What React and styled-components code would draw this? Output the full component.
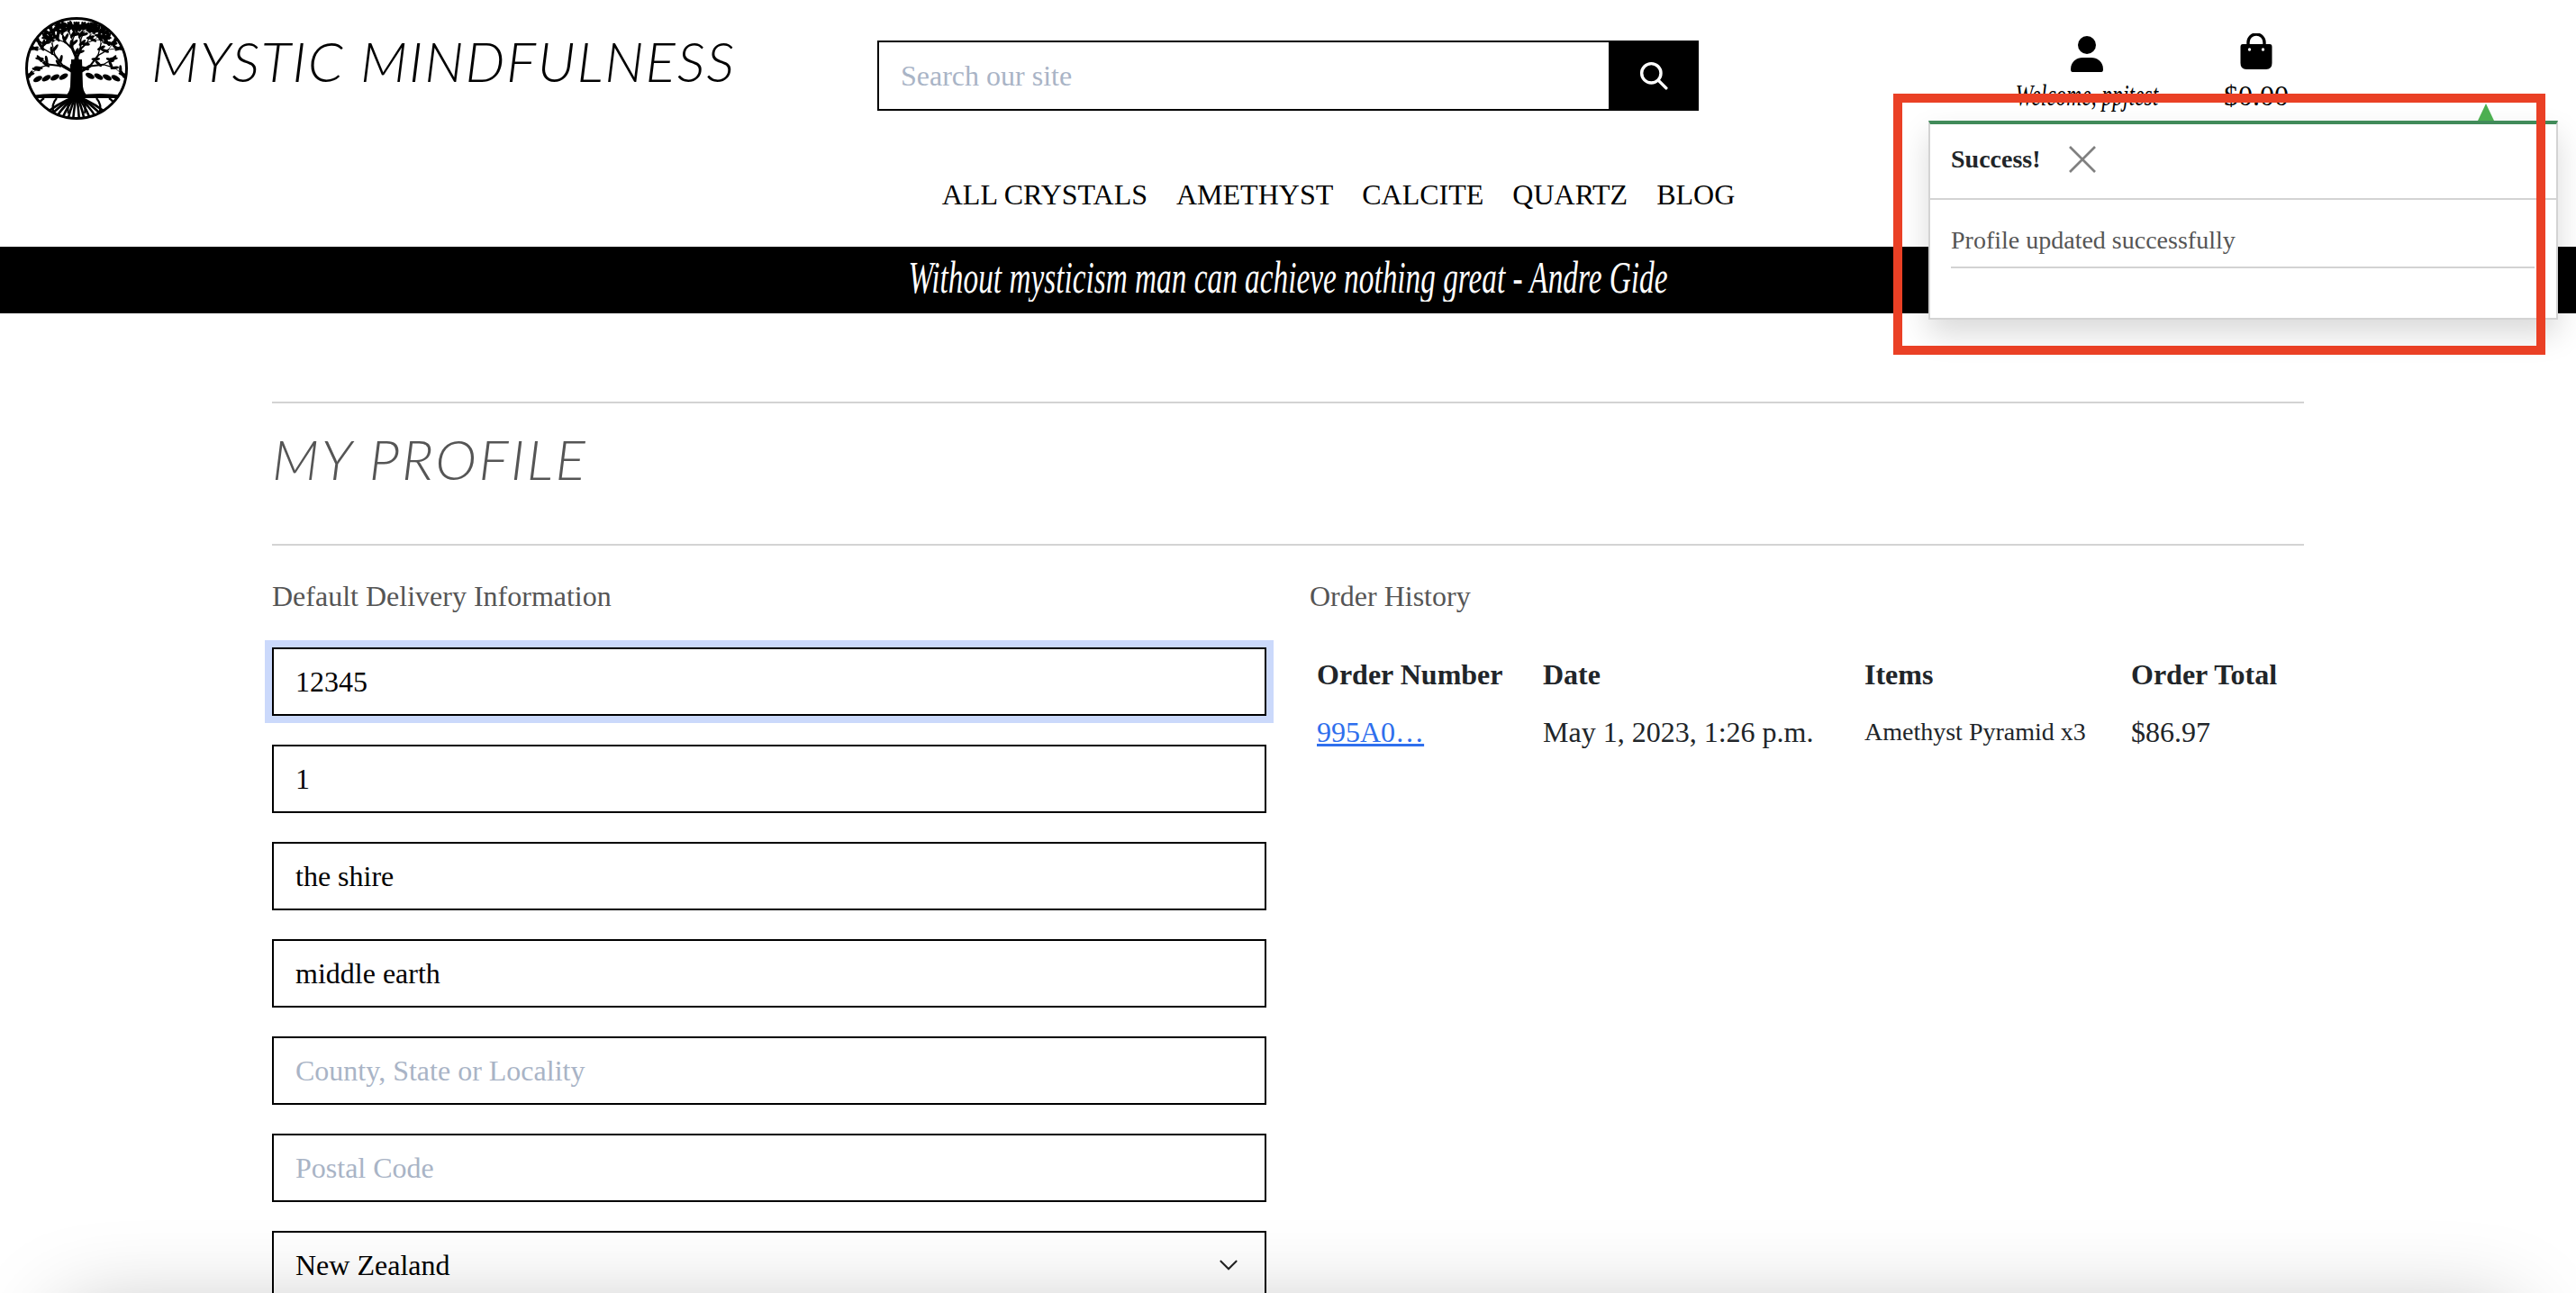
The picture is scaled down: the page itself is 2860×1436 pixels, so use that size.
import React from "react";
import styled, { createGlobalStyle } from "styled-components";

const GlobalStyle = createGlobalStyle`
  html, body {
    margin: 0;
    height: 1436px;
    overflow: hidden;
    background: #fff;
  }
  body {
    font-family: "Liberation Serif", "Times New Roman", serif;
    font-size: 32px;
    color: #000;
  }
  * { box-sizing: border-box; }
`;

// tree logo, grown from a few fixed rules so the branches stay inside the ring
const buildTree = () => {
  const limbs = [];
  const leaves = [];
  const grow = (x, y, angle, len, width, depth) => {
    const x2 = x + Math.cos(angle) * len;
    const y2 = y + Math.sin(angle) * len;
    const tooFar = Math.hypot(x2 - 58, y2 - 58) > 52 || y2 > 68;
    if (tooFar || depth === 0) {
      leaves.push({ x, y, r: (angle * 180) / Math.PI });
      return;
    }
    limbs.push({ x, y, x2, y2, width });
    leaves.push({ x: (x + x2) / 2 + 2, y: (y + y2) / 2 - 2, r: (angle * 180) / Math.PI + 50 });
    grow(x2, y2, angle - 0.4, len * 0.88, width * 0.62, depth - 1);
    grow(x2, y2, angle + 0.4, len * 0.88, width * 0.62, depth - 1);
  };
  grow(58, 60, -Math.PI / 2, 13, 5, 6);
  grow(58, 64, -Math.PI / 2 - 1.05, 17, 3.4, 5);
  grow(58, 64, -Math.PI / 2 + 1.05, 17, 3.4, 5);
  return { limbs, leaves };
};

const tree = buildTree();
const lowLeaves = [14, 24, 34, 44, 72, 82, 92, 102];
const roots = [-44, -34, -25, -17, -10, -4, 3, 9, 16, 24, 33, 43];

const TreeLogo = () => (
  <svg width="116" height="118" viewBox="0 0 116 118">
    <defs>
      <clipPath id="ring">
        <circle cx="58" cy="58" r="56" />
      </clipPath>
    </defs>
    <circle cx="58" cy="58" r="55.5" fill="#fff" stroke="#000" strokeWidth="3" />
    <g clipPath="url(#ring)">
      {tree.limbs.map((l, i) => (
        <line key={i} x1={l.x} y1={l.y} x2={l.x2} y2={l.y2} stroke="#000" strokeWidth={l.width} strokeLinecap="round" />
      ))}
      {tree.leaves.map((l, i) => (
        <ellipse key={i} cx={l.x} cy={l.y} rx="4.8" ry="1.6" fill="#000" transform={`rotate(${l.r} ${l.x} ${l.y})`} />
      ))}
      {lowLeaves.map((x, i) => (
        <ellipse key={x} cx={x} cy={i < 4 ? 70 + i * -1 : 66 + (i - 4)} rx="5.4" ry="2.8" fill="#000" transform={`rotate(${i < 4 ? -28 : 28} ${x} 68)`} />
      ))}
      <path d="M52 48 L64 48 L65 78 Q66 86 72 90 L44 90 Q50 86 51 78 Z" fill="#000" />
      <path d="M8 88 Q34 84 58 88 Q84 84 110 88 L110 91 L8 91 Z" fill="#000" />
      {roots.map((dx) => (
        <path key={dx} d={`M58 89 Q${58 + dx * 0.5} 96 ${58 + dx} 116`} fill="none" stroke="#000" strokeWidth="2.6" />
      ))}
      {[-36, -22, -8, 8, 22, 36].map((dx) => (
        <path key={dx} d={`M${58 + dx} 91 Q${58 + dx * 1.3} 98 ${58 + dx * 1.15} 108`} fill="none" stroke="#000" strokeWidth="2.2" />
      ))}
    </g>
  </svg>
);

const SearchIcon = () => (
  <svg width="32" height="32" viewBox="0 0 30 30" fill="none" stroke="#fff" strokeWidth="3.2" strokeLinecap="round">
    <circle cx="12.5" cy="12.5" r="10" />
    <line x1="20" y1="20" x2="28" y2="28" />
  </svg>
);

const UserIcon = () => (
  <svg width="36" height="43" viewBox="0 -3 36 43" fill="#000">
    <circle cx="18" cy="10" r="10" />
    <path d="M0 37 C0 28 7 24 13 24 L23 24 C29 24 36 28 36 37 Q36 40 34 40 L2 40 Q0 40 0 37 Z" />
  </svg>
);

const BagIcon = () => (
  <svg width="36" height="43" viewBox="0 0 36 43">
    <path d="M9 13 V10 a9 9 0 0 1 18 0 V13" fill="none" stroke="#000" strokeWidth="3.4" />
    <path d="M3 12 H33 Q35.5 12 35.5 15 V33 Q35.5 40 29 40 H7 Q0.5 40 0.5 33 V15 Q0.5 12 3 12 Z" fill="#000" />
    <circle cx="10.5" cy="18" r="1.7" fill="#fff" />
    <circle cx="25.5" cy="18" r="1.7" fill="#fff" />
  </svg>
);

const Chevron = () => (
  <svg width="22" height="12" viewBox="0 0 24 14" fill="none" stroke="#222" strokeWidth="2.4" strokeLinecap="round">
    <path d="M2 2 L12 12 L22 2" />
  </svg>
);

const CloseGlyph = () => (
  <svg width="30" height="30" viewBox="0 0 30 30" stroke="#808080" strokeWidth="2.6">
    <line x1="1" y1="1" x2="29" y2="29" />
    <line x1="29" y1="1" x2="1" y2="29" />
  </svg>
);

const fields = [
  { value: "12345", focused: true },
  { value: "1" },
  { value: "the shire" },
  { value: "middle earth" },
  { placeholder: "County, State or Locality" },
  { placeholder: "Postal Code" },
];

export default function App() {
  return (
    <>
      <GlobalStyle />
      <Page>
        <Header>
          <TopRow>
            <Brand>
              <TreeLogo />
              <BrandName>MYSTIC MINDFULNESS</BrandName>
            </Brand>
            <SearchForm>
              <SearchInput placeholder="Search our site" readOnly />
              <SearchButton aria-label="Search">
                <SearchIcon />
              </SearchButton>
            </SearchForm>
            <AccountLinks>
              <AccountLink>
                <UserIcon />
                <WelcomeText>Welcome, ppjtest</WelcomeText>
              </AccountLink>
              <AccountLink>
                <BagIcon />
                <CartTotal>$0.00</CartTotal>
              </AccountLink>
            </AccountLinks>
          </TopRow>
          <Nav>
            <NavLink>ALL CRYSTALS</NavLink>
            <NavLink>AMETHYST</NavLink>
            <NavLink>CALCITE</NavLink>
            <NavLink>QUARTZ</NavLink>
            <NavLink>BLOG</NavLink>
          </Nav>
        </Header>
        <QuoteBar>
          <QuoteText>Without mysticism man can achieve nothing great - Andre Gide</QuoteText>
        </QuoteBar>
        <Main>
          <TitleBlock>
            <PageTitle>MY PROFILE</PageTitle>
          </TitleBlock>
          <Columns>
            <section>
              <SectionHeading>Default Delivery Information</SectionHeading>
              <Form>
                {fields.map((f, i) => (
                  <TextInput key={i} $focused={f.focused} value={f.value} placeholder={f.placeholder} readOnly />
                ))}
                <SelectBox>
                  New Zealand
                  <Chevron />
                </SelectBox>
              </Form>
            </section>
            <section>
              <SectionHeading>Order History</SectionHeading>
              <OrderTable>
                <thead>
                  <tr>
                    <HeadCell $width={251}>Order Number</HeadCell>
                    <HeadCell $width={357}>Date</HeadCell>
                    <HeadCell $width={296}>Items</HeadCell>
                    <HeadCell $width={200}>Order Total</HeadCell>
                  </tr>
                </thead>
                <tbody>
                  <tr>
                    <BodyCell><OrderLink>995A0…</OrderLink></BodyCell>
                    <BodyCell>May 1, 2023, 1:26 p.m.</BodyCell>
                    <BodyCell $small>Amethyst Pyramid x3</BodyCell>
                    <BodyCell>$86.97</BodyCell>
                  </tr>
                </tbody>
              </OrderTable>
            </section>
          </Columns>
        </Main>

        <Toast>
          <ToastArrow />
          <ToastHead>
            <ToastTitle>Success!</ToastTitle>
            <CloseGlyph />
          </ToastHead>
          <ToastBody>
            <ToastMessage>Profile updated successfully</ToastMessage>
          </ToastBody>
        </Toast>
        <Highlight />
        <BottomShadow />
      </Page>
    </>
  );
}

const Page = styled.div`
  position: relative;
  width: 2860px;
  height: 1436px;
  overflow: hidden;
`;

const Header = styled.header`
  height: 274px;
  display: flex;
  flex-direction: column;
`;

const TopRow = styled.div`
  display: grid;
  grid-template-columns: 974px 912px 1fr;
  height: 192px;
`;

const Brand = styled.a`
  display: flex;
  align-items: flex-start;
  gap: 25px;
  padding: 18px 0 0 27px;
`;

const BrandName = styled.span`
  margin-top: 18px;
  font-family: "Lato", "Liberation Sans", sans-serif;
  font-style: italic;
  font-weight: 300;
  font-size: 62px;
  line-height: 1;
  letter-spacing: 1.8px;
  white-space: nowrap;
`;

const SearchForm = styled.form`
  display: flex;
  height: 78px;
  margin-top: 45px;
`;

const SearchInput = styled.input`
  flex: 1;
  min-width: 0;
  border: 2px solid #000;
  border-right: 0;
  border-radius: 0;
  outline: 0;
  padding: 0 24px;
  font: inherit;
  &::placeholder { color: #a9b4c6; opacity: 1; }
`;

const SearchButton = styled.button`
  width: 100px;
  border: 0;
  padding: 0;
  background: #000;
  display: flex;
  align-items: center;
  justify-content: center;
`;

const AccountLinks = styled.div`
  display: flex;
  padding: 37px 0 0 337px;
`;

const AccountLink = styled.a`
  width: 188px;
  display: flex;
  flex-direction: column;
  align-items: center;
  white-space: nowrap;
`;

const WelcomeText = styled.span`
  margin-top: 8px;
  font-style: italic;
  font-size: 23.5px;
  line-height: 36px;
  transform: scaleY(1.4);
`;

const CartTotal = styled.span`
  margin-top: 8px;
  line-height: 36px;
`;

const Nav = styled.nav`
  display: flex;
  justify-content: center;
  gap: 32px;
  padding-left: 112px;
  line-height: 48px;
`;

const NavLink = styled.a`
  color: #000;
  white-space: nowrap;
`;

const QuoteBar = styled.div`
  height: 74px;
  background: #000;
  display: flex;
  align-items: center;
  justify-content: center;
`;

const QuoteText = styled.span`
  color: #fff;
  font-style: italic;
  font-size: 33.3px;
  white-space: nowrap;
  margin-bottom: 6px;
  transform: scaleY(1.5);
`;

const Main = styled.main`
  width: 2256px;
  margin: 98px auto 0;
`;

const TitleBlock = styled.div`
  height: 160px;
  padding-bottom: 34px;
  border-top: 2px solid #d3d3d3;
  border-bottom: 2px solid #d3d3d3;
  display: flex;
  align-items: center;
`;

const PageTitle = styled.h1`
  margin: 0;
  font-family: "Lato", "Liberation Sans", sans-serif;
  font-style: italic;
  font-weight: 300;
  font-size: 62px;
  line-height: 1;
  letter-spacing: 2.6px;
  color: #555;
`;

const Columns = styled.div`
  display: grid;
  grid-template-columns: 1104px 1104px;
  gap: 48px;
  padding-top: 32px;
`;

const SectionHeading = styled.p`
  margin: 0 0 33px;
  line-height: 48px;
  color: #555;
`;

const Form = styled.div`
  display: flex;
  flex-direction: column;
  gap: 32px;
`;

const TextInput = styled.input`
  height: 76px;
  width: 100%;
  border: 2px solid #000;
  border-radius: 0;
  outline: 0;
  padding: 0 24px;
  font: inherit;
  color: #000;
  box-shadow: ${(p) => (p.$focused ? "0 0 0 8px #cbd9fb" : "none")};
  &::placeholder { color: #a9b4c6; opacity: 1; }
`;

const SelectBox = styled.div`
  height: 76px;
  border: 2px solid #000;
  padding: 0 29px 0 24px;
  display: flex;
  align-items: center;
  justify-content: space-between;
`;

const OrderTable = styled.table`
  border-collapse: collapse;
  table-layout: fixed;
  width: 1104px;
  margin-top: -2px;
`;

const HeadCell = styled.th`
  width: ${(p) => p.$width}px;
  padding: 8px;
  text-align: left;
  font-weight: 700;
  line-height: 48px;
  color: #212529;
  white-space: nowrap;
`;

const BodyCell = styled.td`
  padding: 8px;
  font-size: ${(p) => (p.$small ? "28px" : "32px")};
  line-height: 48px;
  color: #212529;
  vertical-align: top;
  white-space: nowrap;
`;

const OrderLink = styled.a`
  color: #2f6fed;
  text-decoration: underline;
`;

const Toast = styled.div`
  position: absolute;
  top: 134px;
  left: 2141px;
  width: 699px;
  height: 221px;
  background: #fff;
  border: 2px solid #d3d3d3;
  border-top: 4px solid #418b5a;
  box-shadow: 0 16px 32px rgba(0, 0, 0, 0.15);
`;

const ToastArrow = styled.div`
  position: absolute;
  top: -23px;
  left: 608px;
  width: 0;
  height: 0;
  border-left: 9px solid transparent;
  border-right: 9px solid transparent;
  border-bottom: 19px solid #4caf50;
`;

const ToastHead = styled.div`
  height: 84px;
  display: flex;
  align-items: center;
  gap: 31px;
  padding: 0 23px 4px;
  border-bottom: 2px solid #d3d3d3;
`;

const ToastTitle = styled.strong`
  font-size: 28px;
  color: #212529;
`;

const ToastBody = styled.div`
  padding: 24px 24px 0 23px;
`;

const ToastMessage = styled.p`
  margin: 0;
  padding-bottom: 8px;
  border-bottom: 2px solid #d3d3d3;
  font-size: 28px;
  line-height: 42px;
  color: #555;
`;

const Highlight = styled.div`
  position: absolute;
  top: 104px;
  left: 2102px;
  width: 724px;
  height: 290px;
  border: 10px solid #ea4025;
`;

const BottomShadow = styled.div`
  position: absolute;
  top: 1460px;
  left: 70px;
  right: 70px;
  height: 100px;
  box-shadow: 0 0 100px rgba(0, 0, 0, 0.28);
`;
